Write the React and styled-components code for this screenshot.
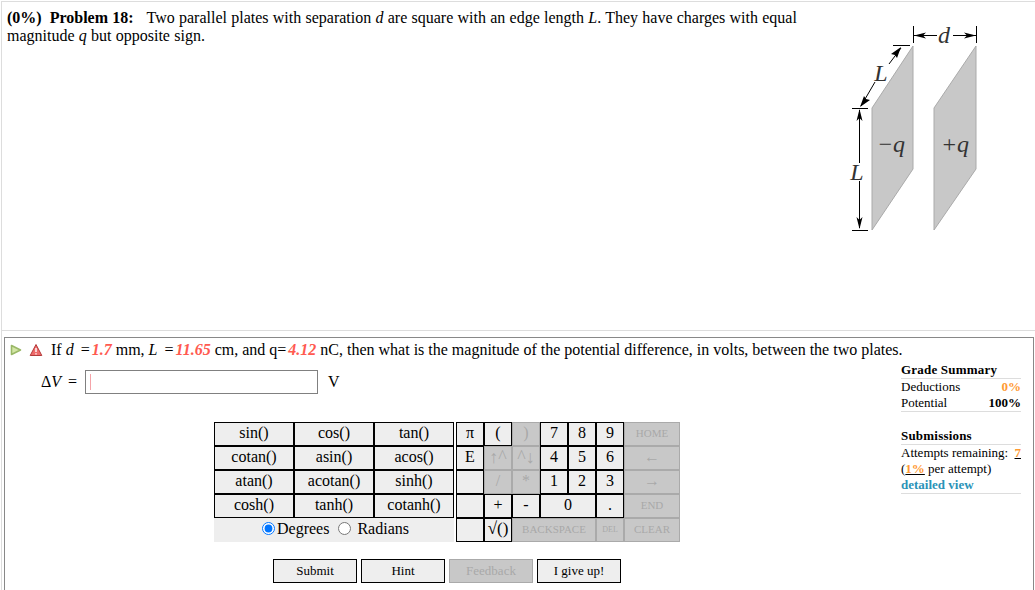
import React from "react";
import styled, { createGlobalStyle } from "styled-components";

const GlobalStyle = createGlobalStyle`
  html, body {
    margin: 0;
    height: 590px;
    overflow: hidden;
    background: #fff;
    font-family: "Liberation Serif", "Times New Roman", serif;
    color: #000;
  }
`;

const Page = styled.div`
  box-sizing: border-box;
  width: 1034px;
  height: 589px;
  margin: 1px 0 0 1px;
  border-left: 1px solid #ddd;
  overflow: hidden;
  display: flex;
  flex-direction: column;
`;

const ProblemPanel = styled.section`
  box-sizing: border-box;
  height: 330px;
  flex: none;
  border: 1px solid #ddd;
  border-width: 1px 0;
  padding: 7px 0 0 5px;
  display: flex;
  justify-content: space-between;
  font-size: 16px;
  line-height: 18px;
`;

const ProblemText = styled.div`
  width: 800px;
  word-spacing: 0.25px;
`;

const ProblemTitle = styled.b`
  margin-right: 9px;
`;

const Tag = styled.b`
  margin-right: 8px;
`;

const Var = styled.i`
  font-family: "Liberation Serif", serif;
`;

const FigureBox = styled.div`
  width: 140px;
  margin: 11px 55px 0 0;
`;

const QuestionPanel = styled.section`
  box-sizing: border-box;
  flex: 1;
  margin: 6px 1px 0 2px;
  border: 1px solid #888;
  border-bottom: none;
  display: flex;
  justify-content: space-between;
`;

const MainColumn = styled.div`
  width: 880px;
  padding: 3px 0 0 5px;
`;

const QuestionLine = styled.div`
  display: flex;
  align-items: center;
  gap: 7px;
  height: 18px;
  font-size: 16px;
  white-space: nowrap;

  svg {
    flex: none;
  }
`;

const QuestionText = styled.span`
  margin-left: 1px;
`;

const Equals = styled.span`
  margin: 0 2px 0 3px;
`;

const Given = styled.i`
  color: #ff5a50;
  font-weight: bold;
  margin-left: ${({ $gap }) => $gap || 0}px;
`;

const AnswerRow = styled.div`
  display: flex;
  align-items: center;
  height: 24px;
  margin: 11px 0 0 31px;
  font-size: 16px;
`;

const AnswerLabel = styled.span`
  width: 44px;
  white-space: nowrap;
`;

const AnswerInput = styled.div`
  box-sizing: border-box;
  width: 233px;
  height: 24px;
  border: 1px solid #808080;
  padding: 3px 0 3px 4px;
  display: flex;
`;

const Caret = styled.span`
  width: 1px;
  background: #f5a3a8;
`;

const Unit = styled.span`
  margin-left: 10px;
`;

const Calculator = styled.div`
  display: flex;
  gap: 2px;
  margin: 28px 0 0 204px;
`;

const FunctionPad = styled.div`
  display: grid;
  grid-template-columns: repeat(3, 80px);
  grid-auto-rows: 24px;
`;

const KeyPad = styled.div`
  display: grid;
  grid-template-columns: repeat(6, 28px) 56px;
  grid-auto-rows: 24px;
`;

const Key = styled.div`
  box-sizing: border-box;
  display: flex;
  align-items: center;
  justify-content: center;
  padding-bottom: 2px;
  grid-column: span ${({ $span }) => $span || 1};
  border: 1px solid ${({ $off }) => ($off ? "#aaa" : "#000")};
  background: ${({ $off }) => ($off ? "#c8c8c8" : "#eee")};
  color: ${({ $off }) => ($off ? "#a8a8a8" : "#000")};
  font-size: ${({ $size }) => $size || 16}px;
  white-space: nowrap;
  overflow: hidden;
`;

const AngleRow = styled.div`
  grid-column: span 3;
  display: flex;
  align-items: center;
  justify-content: center;
  padding: 0 0 3px 3px;
  background: #eee;
  font-size: 16px;
`;

const AngleRadio = styled.input`
  margin: 0 2px 0 0;
  width: 13px;
  height: 13px;
  accent-color: #0075ff;
`;

const AngleLabel = styled.span`
  margin-right: 9px;
`;

const ActionRow = styled.div`
  display: flex;
  gap: 4px;
  margin: 17px 0 0 263px;
`;

const ActionButton = styled.div`
  box-sizing: border-box;
  width: 84px;
  height: 24px;
  display: flex;
  align-items: center;
  justify-content: center;
  padding-bottom: 1px;
  border: 1px solid ${({ $off }) => ($off ? "#aaa" : "#000")};
  background: ${({ $off }) => ($off ? "#c8c8c8" : "#eee")};
  color: ${({ $off }) => ($off ? "#a8a8a8" : "#000")};
  font-size: 13px;
`;

const Summary = styled.aside`
  width: 120px;
  margin: 24px 12px 0 0;
  font-size: 13px;
  line-height: 16px;
`;

const SummaryBlock = styled.div`
  border-bottom: 1px solid #ddd;
  margin-bottom: 16px;
`;

const SummaryTitle = styled.div`
  font-weight: bold;
  letter-spacing: 0.2px;
  border-bottom: 1px solid #ddd;
`;

const SummaryRow = styled.div`
  display: flex;
  justify-content: space-between;
`;

const Strong = styled.b`
  color: ${({ $accent }) => ($accent ? "#ff9a33" : "#000")};
`;

const Attempts = styled.b`
  color: #ff9a33;
  text-decoration: underline;
  text-decoration-color: #000;
`;

const DetailLink = styled.div`
  color: #2a93b8;
  font-weight: bold;
`;

const FigureText = styled.text`
  font-family: "Liberation Serif", serif;
  font-style: italic;
  font-size: 24px;
  fill: #333;
  text-anchor: middle;
`;

const Arrow = ({ d }) => <path d={d} fill="#000" stroke="none" />;

const PlatesFigure = () => (
  <svg width="140" height="222" viewBox="0 0 140 222" style={{ display: "block" }}>
    <polygon points="32,88 73,26 73,149 32,210" fill="#c8c8c8" stroke="#aaa" />
    <polygon points="94,88 136,26 136,149 94,210" fill="#c8c8c8" stroke="#aaa" />
    <g stroke="#000" fill="none" strokeWidth="1">
      <path d="M73.5 6V23M136.5 6V23" />
      <path d="M74 15.5H97M113 15.5H136" />
      <path d="M53 25.5H70M12 88.5H28M12 210.5H28" />
      <path d="M61 28L49 44M35 62L21 86" />
      <path d="M19.5 90V143M19.5 161V208" />
    </g>
    <Arrow d="M74 15.5L86 12.5L83 15.5L86 18.5Z" />
    <Arrow d="M136 15.5L124 12.5L127 15.5L124 18.5Z" />
    <Arrow d="M61 27L57 38L55 35L51 34Z" />
    <Arrow d="M20 87L24 76L26 79L30 80Z" />
    <Arrow d="M19.5 89L16.5 101L19.5 98L22.5 101Z" />
    <Arrow d="M19.5 209L16.5 197L19.5 200L22.5 197Z" />
    <FigureText x="104" y="23">d</FigureText>
    <FigureText x="41" y="61">L</FigureText>
    <FigureText x="17" y="160">L</FigureText>
    <FigureText x="51" y="132">−q</FigureText>
    <FigureText x="115" y="132">+q</FigureText>
  </svg>
);

const PlayIcon = () => (
  <svg width="12" height="12" viewBox="0 0 12 12">
    <path d="M1.5 1.5L10.5 6L1.5 10.5Z" fill="#d3e6a5" stroke="#9ab867" strokeWidth="1.6" strokeLinejoin="round" />
  </svg>
);

const WarningIcon = () => (
  <svg width="14" height="14" viewBox="0 0 14 14">
    <path d="M7 1.5L12.8 12.5H1.2Z" fill="#ee6a6a" stroke="#b23a3a" strokeLinejoin="round" />
    <path d="M7 5V9M7 10.2V11.4" stroke="#fff" strokeWidth="1.4" />
  </svg>
);

const functionKeys = [
  "sin()", "cos()", "tan()",
  "cotan()", "asin()", "acos()",
  "atan()", "acotan()", "sinh()",
  "cosh()", "tanh()", "cotanh()",
];

const padKeys = [
  { t: "π" }, { t: "(" }, { t: ")", off: true }, { t: "7" }, { t: "8" }, { t: "9" }, { t: "HOME", off: true, size: 11 },
  { t: "E" }, { t: "↑^", off: true, size: 18 }, { t: "^↓", off: true, size: 18 }, { t: "4" }, { t: "5" }, { t: "6" }, { t: "←", off: true },
  { t: "" }, { t: "/", off: true }, { t: "*", off: true }, { t: "1" }, { t: "2" }, { t: "3" }, { t: "→", off: true },
  { t: "" }, { t: "+" }, { t: "-" }, { t: "0", span: 2 }, { t: "." }, { t: "END", off: true, size: 11 },
  { t: "" }, { t: "√()", size: 17 }, { t: "BACKSPACE", off: true, span: 3, size: 11 }, { t: "DEL", off: true, size: 8 }, { t: "CLEAR", off: true, size: 11 },
];

const App = () => (
  <Page>
    <GlobalStyle />
    <ProblemPanel>
      <ProblemText>
        <Tag>(0%)</Tag>
        <ProblemTitle>Problem 18:</ProblemTitle> Two parallel plates with separation <Var>d</Var> are square with an edge
        length <Var>L</Var>. They have charges with equal magnitude <Var>q</Var> but opposite sign.
      </ProblemText>
      <FigureBox>
        <PlatesFigure />
      </FigureBox>
    </ProblemPanel>
    <QuestionPanel>
      <MainColumn>
        <QuestionLine>
          <PlayIcon />
          <WarningIcon />
          <QuestionText>
            If <Var>d</Var> <Equals>=</Equals><Given>1.7</Given> mm, <Var>L</Var> <Equals>=</Equals><Given>11.65</Given> cm, and q=<Given $gap={2}>4.12</Given> nC,
            then what is the magnitude of the potential difference, in volts, between the two plates.
          </QuestionText>
        </QuestionLine>
        <AnswerRow>
          <AnswerLabel>Δ<Var>V</Var> <Equals>=</Equals></AnswerLabel>
          <AnswerInput><Caret /></AnswerInput>
          <Unit>V</Unit>
        </AnswerRow>
        <Calculator>
          <FunctionPad>
            {functionKeys.map((k) => <Key key={k}>{k}</Key>)}
            <AngleRow>
              <AngleRadio type="radio" name="angle" defaultChecked />
              <AngleLabel>Degrees</AngleLabel>
              <AngleRadio type="radio" name="angle" />
              <span>&nbsp;Radians</span>
            </AngleRow>
          </FunctionPad>
          <KeyPad>
            {padKeys.map((k, i) => (
              <Key key={i} $off={k.off} $span={k.span} $size={k.size}>{k.t}</Key>
            ))}
          </KeyPad>
        </Calculator>
        <ActionRow>
          <ActionButton>Submit</ActionButton>
          <ActionButton>Hint</ActionButton>
          <ActionButton $off>Feedback</ActionButton>
          <ActionButton>I give up!</ActionButton>
        </ActionRow>
      </MainColumn>
      <Summary>
        <SummaryBlock>
          <SummaryTitle>Grade Summary</SummaryTitle>
          <SummaryRow><span>Deductions</span><Strong $accent>0%</Strong></SummaryRow>
          <SummaryRow><span>Potential</span><Strong>100%</Strong></SummaryRow>
        </SummaryBlock>
        <SummaryBlock>
          <SummaryTitle>Submissions</SummaryTitle>
          <SummaryRow><span>Attempts remaining:</span><Attempts>7</Attempts></SummaryRow>
          <div>(<Attempts>1%</Attempts> per attempt)</div>
          <DetailLink>detailed view</DetailLink>
        </SummaryBlock>
      </Summary>
    </QuestionPanel>
  </Page>
);

export default App;
